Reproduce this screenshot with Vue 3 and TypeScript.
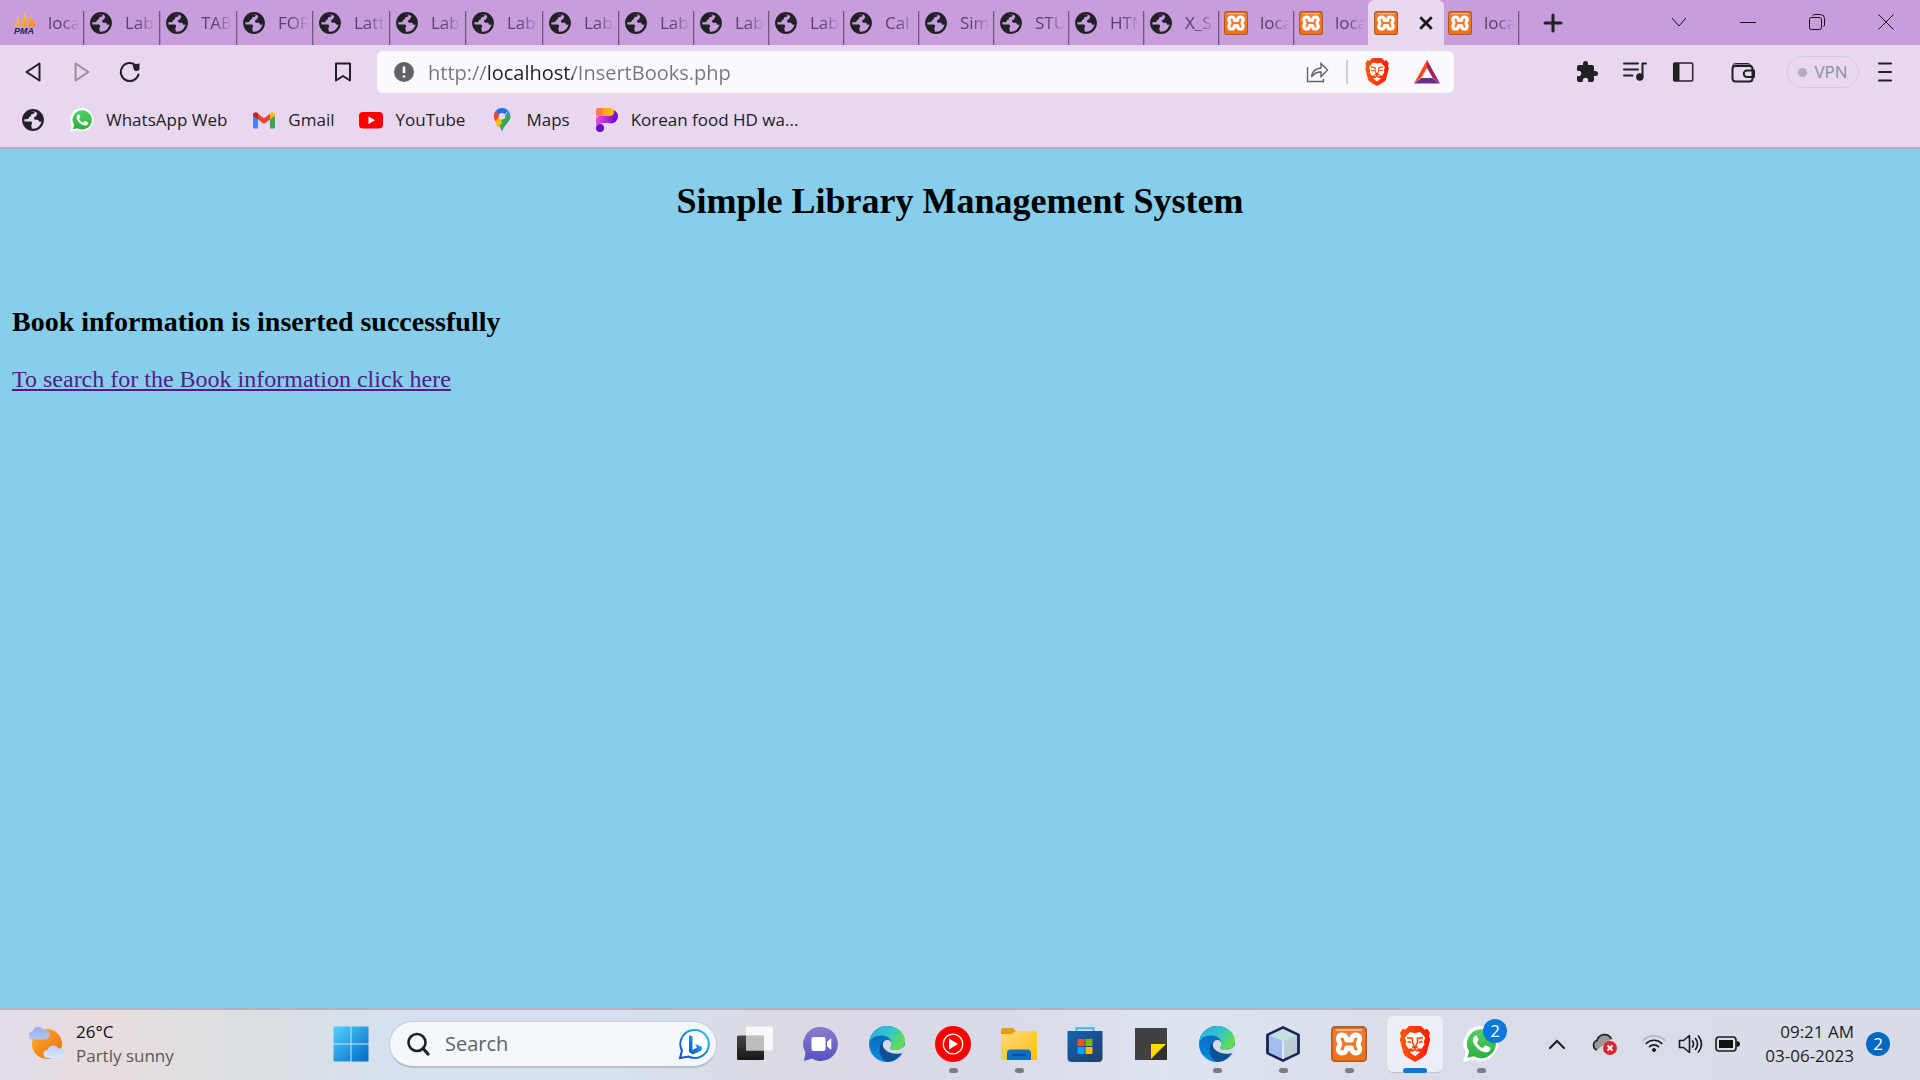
<script setup lang="ts">
import { ref } from 'vue'

interface Tab {
  title: string
  icon: 'globe' | 'xampp' | 'pma'
  size?: 'first' | 'wide' | 'wider' | 'last'
  active?: boolean
}

const tabs: Tab[] = [
  { title: 'loca', icon: 'pma', size: 'first' },
  { title: 'Lab', icon: 'globe', size: 'wide' },
  { title: 'TAB', icon: 'globe', size: 'wider' },
  { title: 'FOR', icon: 'globe', size: 'wide' },
  { title: 'Latt', icon: 'globe', size: 'wider' },
  { title: 'Lab', icon: 'globe', size: 'wide' },
  { title: 'Lab', icon: 'globe', size: 'wider' },
  { title: 'Lab', icon: 'globe', size: 'wide' },
  { title: 'Lab', icon: 'globe' },
  { title: 'Lab', icon: 'globe' },
  { title: 'Lab', icon: 'globe' },
  { title: 'Cal', icon: 'globe' },
  { title: 'Sim', icon: 'globe' },
  { title: 'STU', icon: 'globe' },
  { title: 'HTM', icon: 'globe' },
  { title: 'X_S', icon: 'globe' },
  { title: 'loca', icon: 'xampp' },
  { title: 'loca', icon: 'xampp', size: 'last' },
  { title: '', icon: 'xampp', active: true },
  { title: 'loca', icon: 'xampp', size: 'wide' },
]

const bookmarks = [
  { icon: 'whatsapp', label: 'WhatsApp Web' },
  { icon: 'gmail', label: 'Gmail' },
  { icon: 'youtube', label: 'YouTube' },
  { icon: 'maps', label: 'Maps' },
  { icon: 'picsart', label: 'Korean food HD wa...' },
]

const apps = [
  { icon: 'taskview', name: 'Task view' },
  { icon: 'chat', name: 'Chat' },
  { icon: 'edge', name: 'Edge' },
  { icon: 'music', name: 'YouTube Music', running: true },
  { icon: 'folder', name: 'File Explorer', running: true },
  { icon: 'store', name: 'Store' },
  { icon: 'notes', name: 'Sticky Notes' },
  { icon: 'edge', name: 'Edge', running: true },
  { icon: 'cube', name: 'NetBeans', running: true },
  { icon: 'xampp', name: 'XAMPP', running: true },
  { icon: 'brave', name: 'Brave', running: true, active: true },
  { icon: 'whatsapp', name: 'WhatsApp', running: true, badge: 2 },
]

const url = ref('http://localhost/InsertBooks.php')
const query = ref('')
</script>

<template>
  <div class="screen">
    <svg class="defs" aria-hidden="true">
      <defs>
        <linearGradient id="gWin" x1="0" y1="0" x2="1" y2="1"><stop offset="0" stop-color="#4fd4fc" /><stop offset="1" stop-color="#0067c6" /></linearGradient>
        <linearGradient id="gSun" x1="0" y1="0" x2="1" y2="1"><stop offset="0" stop-color="#f9b52a" /><stop offset="1" stop-color="#f0650f" /></linearGradient>
        <linearGradient id="gCloud" x1="0" y1="0" x2="0" y2="1"><stop offset="0" stop-color="#93b0ee" /><stop offset="1" stop-color="#d9e6fa" /></linearGradient>
        <linearGradient id="gOrange" x1="0" y1="0" x2="0" y2="1"><stop offset="0" stop-color="#c9682a" /><stop offset=".15" stop-color="#f07c32" /><stop offset="1" stop-color="#ee7019" /></linearGradient>
        <linearGradient id="gChat" x1="0" y1="0" x2="0" y2="1"><stop offset="0" stop-color="#8c7cc8" /><stop offset="1" stop-color="#5552c6" /></linearGradient>
        <linearGradient id="gEdgeTop" x1="0" y1="0" x2="1" y2=".5"><stop offset="0" stop-color="#2fa9e6" /><stop offset=".55" stop-color="#31c3cf" /><stop offset="1" stop-color="#62dd50" /></linearGradient>
        <linearGradient id="gEdgeLow" x1="0" y1="0" x2="0" y2="1"><stop offset="0" stop-color="#0c63b4" /><stop offset="1" stop-color="#0a8be3" /></linearGradient>
        <linearGradient id="gFolder" x1="0" y1="0" x2="1" y2="1"><stop offset="0" stop-color="#ffdc76" /><stop offset="1" stop-color="#fbbc16" /></linearGradient>
        <linearGradient id="gStore" x1="0" y1="0" x2="1" y2="1"><stop offset="0" stop-color="#0f66b5" /><stop offset="1" stop-color="#253b66" /></linearGradient>
        <linearGradient id="gBrave" x1="0" y1="0" x2="1" y2="0"><stop offset="0" stop-color="#ff5a0a" /><stop offset="1" stop-color="#ff1a00" /></linearGradient>
        <linearGradient id="gWa" x1="0" y1="0" x2="0" y2="1"><stop offset="0" stop-color="#55cf64" /><stop offset="1" stop-color="#2fae43" /></linearGradient>
        <linearGradient id="gBing" x1="1" y1="0" x2="0" y2="1"><stop offset="0" stop-color="#22c7ee" /><stop offset="1" stop-color="#1648c8" /></linearGradient>
        <linearGradient id="gPma" x1="0" y1="0" x2="1" y2="1"><stop offset="0" stop-color="#ffd27a" /><stop offset="1" stop-color="#f68a00" /></linearGradient>
        <linearGradient id="gDark" x1="0" y1="0" x2="0" y2="1"><stop offset="0" stop-color="#474747" /><stop offset="1" stop-color="#161616" /></linearGradient>
        <linearGradient id="gPic" x1="0" y1="0" x2="1" y2="0"><stop offset="0" stop-color="#ff7a4a" /><stop offset="1" stop-color="#ffc808" /></linearGradient>
        <linearGradient id="gPic2" x1="0" y1="0" x2="1" y2="0"><stop offset="0" stop-color="#f04be0" /><stop offset="1" stop-color="#8a12e8" /></linearGradient>
      </defs>
      <symbol id="globe" viewBox="0 0 24 24">
        <circle cx="12" cy="12" r="9.800" fill="none" stroke="#202124" stroke-width="2.200" />
        <path fill="#202124" d="M3 9 5 5.500 9 3.200 13.500 3.400C14 5.200 12.800 5.800 11.300 6 9.200 6.300 10.700 8.600 8.700 8.800 7.500 9 8.200 10.600 7 10.900 5.400 11.200 4.600 11.300 3 11.200zM14.500 3 18.500 5 21.200 9 21.400 13C19.500 14.400 17.800 13.700 17.500 12.200 17.200 11.300 15 12.300 13.700 11.500 12.300 10.500 13.200 8.700 15 8.600 15.800 8.500 14.800 6.600 16.500 6zM3 13.600H9.400C11.200 13.600 11.700 15.800 10.400 17 9.500 17.900 11.200 18.500 10.600 19.700L11 21.500 6.500 19.700 4 17z" />
      </symbol>
      <symbol id="pma" viewBox="0 0 24 24">
        <path fill="url(#gPma)" d="M1.500 15.500C4 12 5.500 8.500 6.200 4.200c1 4 1.400 8 .6 11.300zM8 15.500C11 11 12.300 6 12.600.500 15 5.500 15.500 10.500 14.600 15.500zM16 15.500c1.500-4 1.600-7 1.200-11C21 8 23 12 23.500 15.500z" />
        <text x="12" y="23" text-anchor="middle" font-family="Liberation Sans, sans-serif" font-size="9" font-weight="700" font-style="italic" fill="#25254f">PMA</text>
      </symbol>
      <symbol id="xampp" viewBox="0 0 36 36">
        <rect x=".8" y=".8" width="34.400" height="34.400" rx="3.500" fill="url(#gOrange)" stroke="#b35b1e" stroke-width="1.600" />
        <path d="M4 3h28l-2 2H6z" fill="#f7b48a" />
        <path fill="#f07822" stroke="#fff" stroke-width="4.800" stroke-linejoin="round" d="M11 9c3 0 4.600 2 4.600 5h4.800c0-3 1.600-5 4.600-5 3 0 4.300 2.800 3.500 5.200-.7 1.500-1.300 2.300-1.300 3.800s.6 2.300 1.300 3.800c.8 2.400-.5 5.200-3.500 5.200s-4.600-2-4.600-5h-4.800c0 3-1.600 5-4.600 5s-4.300-2.800-3.500-5.200c.7-1.500 1.300-2.300 1.300-3.800s-.6-2.300-1.300-3.800C6.700 11.800 8 9 11 9z" />
      </symbol>
      <symbol id="whatsapp" viewBox="0 0 36 36">
        <path fill="#fff" d="M18.500 0A17.500 17.500 0 1 1 10.500 33.500L0 36 2.700 26A17.500 17.500 0 0 1 18.500 0z" />
        <path fill="url(#gWa)" d="M18.500 3.200A14.500 14.500 0 1 1 11 30.200L4.400 31.700 6.200 25.500A14.500 14.500 0 0 1 18.500 3.200z" />
        <path fill="#fff" d="M13 9.800c-.9 0-3 1.500-3 4.200 0 5.600 7.300 12.300 12.900 12.300 2.800 0 4.500-2 4.500-3.600 0-1-.2-1.100-.8-1.500l-3.500-1.700c-.6-.2-1-.1-1.300.3l-1.500 1.800c-.4.500-.9.400-1.400.2-2-.9-3.700-2.500-4.900-4.700-.2-.5-.1-.8.200-1.200l1.200-1.500c.3-.4.2-.8.100-1.200l-1.500-3.300c-.2-.4-.5-.6-1-.1z" />
      </symbol>
      <symbol id="gmail" viewBox="0 0 24 24">
        <path fill="#4285f4" d="M1 6.500 6 10.200V20.500H2.500A1.500 1.500 0 0 1 1 19z" />
        <path fill="#34a853" d="M23 6.500 18 10.200V20.500h3.500A1.500 1.500 0 0 0 23 19z" />
        <path fill="#ea4335" d="M6 5.800 12 10.300 18 5.800V11.500L12 16 6 11.500z" />
        <path fill="#c5221f" d="M1 7C1 4 4 3.600 5.500 4.800L6 5.200v6.300L1 7.800z" />
        <path fill="#fbbc04" d="M23 7c0-3-3-3.400-4.500-2.200L18 5.200v6.300l5-3.700z" />
      </symbol>
      <symbol id="youtube" viewBox="0 0 24 24">
        <rect y="4" width="24" height="16.500" rx="4" fill="#f00" /><path d="M9.500 8.500v7.500l6.500-3.800z" fill="#fff" />
      </symbol>
      <symbol id="maps" viewBox="0 0 24 24">
        <path fill="#34a853" d="M20.300 8.200c0 5.800-6.200 8.300-8.300 15.800-1-3.800-2.500-6-4.200-8.300z" />
        <path fill="#fbbc04" d="M5 11.700 9.500 7l5 5-6.700 7.500C6.500 16 5.500 14 5 11.700z" />
        <path fill="#ea4335" d="M5.600 3l5 4-5.300 6.200C3.200 9.500 3.300 6 5.600 3z" />
        <path fill="#1a73e8" d="M5.600 3C8.500-.500 14.500-1 18 2.500L12 9.500z" />
        <path fill="#4285f4" d="M18 2.500c1.500 1.500 2.300 3.500 2.300 5.700 0 1-.3 2.300-.8 3.300l-5-3z" />
        <path fill="#34a853" d="M20.300 8.200c0 4-3 6.500-5.300 9.300l-4-4.500 6-7z" />
        <circle cx="12" cy="8.300" r="3.200" fill="#e9d7ef" />
      </symbol>
      <symbol id="picsart" viewBox="0 0 24 24">
        <circle cx="16" cy="8.500" r="7" fill="#7a10d8" />
        <rect x="1" y="0" width="18" height="8" rx="4" fill="url(#gPic)" /><path d="M1 3q0-3 3-3h3v8H1z" fill="#ff7a4a" />
        <path d="M1 17v-5c0-3 1-4 4-4h9c5 0 5 7 0 7H8z" fill="url(#gPic2)" />
        <circle cx="5" cy="20" r="4" fill="#6a0bc6" />
      </symbol>
      <symbol id="brave" viewBox="0 0 36 36">
        <path fill="url(#gBrave)" d="M12 0h12l3.500 3.500 3-.500 2.500 4-1 3 1.200 3.500-3.700 14C28.500 30 25 32 18 36 11 32 7.500 30 6.500 27.500L2.800 13.500 4 10 3 7l2.500-4 3 .5z" />
        <path fill="#fff" d="M18 7.200l5-1.200 5.200 5.500-1.500 4.500.8 2.200-3 4.500-3.800-.5-.7 1.600 3 2.500-5 4-5-4 3-2.500-.7-1.600-3.800.5-3-4.500.8-2.200L7.800 11.500 13 6z" />
        <path fill="none" stroke="#ff4200" stroke-width="1.500" d="M10 11.500l5.500 1v4l2.500 5 2.500-5v-4l5.500-1M15 20.500l3 2 3-2M10.500 15.500l3.500 1M25.500 15.500l-3.500 1M14.500 25.500l3.500-2 3.500 2" />
      </symbol>
      <symbol id="taskview" viewBox="0 0 36 36">
        <rect y="9.500" width="27" height="24.500" rx="1.500" fill="url(#gDark)" /><rect x="9" y=".5" width="27" height="24" rx="1.200" fill="#fff" opacity=".8" /><path d="M9 9.500h18v15H9z" fill="#b9b9b9" opacity=".85" />
      </symbol>
      <symbol id="chat" viewBox="0 0 36 36">
        <path fill="url(#gChat)" d="M18 1a17 17 0 1 1-9 31.500L1 35l1.500-8.500A17 17 0 0 1 18 1z" />
        <rect x="8.500" y="11" width="14" height="14" rx="2" fill="#fff" /><path fill="#fff" d="M24 16l3.500-3.500h.8v11h-.8L24 20z" />
      </symbol>
      <symbol id="edge" viewBox="0 0 36 36">
        <circle cx="18" cy="18" r="18" fill="url(#gEdgeLow)" />
        <path fill="url(#gEdgeTop)" d="M0 17A18 18 0 0 1 18 0c11 0 18 7.500 18 15 0 6-4.500 9-9 9-4 0-6-1-6-2.500 0-1 1.500-1.500 1.500-4C22.500 12 17 9.500 12 9.500 6 9.500 1.500 12.500 0 17z" />
        <path fill="#104f98" d="M11 20c1-4 3.500-6 6.500-6-3 2.500-3.500 6-1.500 9 3 4.500 9 5.500 13 4l3.500-.5C30 32 24.500 36 18 36c-5-2-8.500-8-7-16z" />
        <path fill="#d7d9e7" d="M13.800 18c.5-2.500 2.200-4 4.500-4 2.700 0 4.200 1.700 4.200 4 0 2.200-1.500 2.700-1.500 3.700C21 23 23 24 27 24c3 0 6-1.200 9-5v7l-2.500 1c-1.500.5-3.500.700-5.500.7-7 0-14.500-3.500-14.200-9.700z" />
      </symbol>
      <symbol id="music" viewBox="0 0 36 36">
        <circle cx="18" cy="18" r="18" fill="#f00" /><circle cx="18" cy="18" r="9.800" fill="none" stroke="#fff" stroke-width="1.300" /><path d="M14 12.500v11l9-5.500z" fill="#fff" />
      </symbol>
      <symbol id="folder" viewBox="0 0 36 36">
        <path fill="#dfa00c" d="M0 4a2 2 0 0 1 2-2h10l3 3v6H0z" /><path fill="url(#gFolder)" d="M0 8h11l4-3h19a2 2 0 0 1 2 2v27H0z" />
        <path fill="#0e6fc2" d="M6 34V27a3.500 3.500 0 0 1 3.500-3.500h17A3.500 3.500 0 0 1 30 27v7z" /><path d="M11 29h14" stroke="#084f91" stroke-width="1.800" />
      </symbol>
      <symbol id="store" viewBox="0 0 36 36">
        <path d="M9.500 7V2.200h17V7" fill="none" stroke="#35b8ec" stroke-width="2" /><path fill="url(#gStore)" d="M.5 5h35v27a4 4 0 0 1-4 4h-27a4 4 0 0 1-4-4z" />
        <path fill="#f25022" d="M10.500 13h7v7h-7z" /><path fill="#7fba00" d="M18.500 13h7v7h-7z" /><path fill="#00a4ef" d="M10.500 21h7v7h-7z" /><path fill="#ffb900" d="M18.500 21h7v7h-7z" />
      </symbol>
      <symbol id="notes" viewBox="0 0 36 36">
        <path d="M2 2h32v32H2z" fill="#414141" /><path d="M18 18h16v16H18z" fill="#303030" /><path d="M18 18h15L18 33z" fill="#fedc00" />
      </symbol>
      <symbol id="cube" viewBox="0 0 36 36">
        <path d="M18 1.500 33.500 9v18L18 34.500 2.500 27V9z" fill="#b8cdf5" stroke="#1c2358" stroke-width="2.800" stroke-linejoin="round" />
        <path d="M18 3 32 9.500 18 15 4 9.500z" fill="#c5dfdc" /><path d="M18 15v18l14-6.500v-17z" fill="#bccdd6" /><path d="M4 9.500 18 15v18L4 26.500z" fill="#a5bcf0" /><path d="M18 15v18" stroke="#edf5ff" stroke-width="1.500" />
      </symbol>
    </svg>

    <header class="browser">
      <nav class="tabs" aria-label="Tabs">
        <button v-for="(tab, i) in tabs" :key="i" type="button" class="tab" :class="[tab.size, { active: tab.active }]">
          <svg class="i24"><use :href="'#' + tab.icon" /></svg>
          <span v-if="!tab.active" class="tab-title">{{ tab.title }}</span>
          <svg v-else class="tab-close" viewBox="0 0 14 14"><path d="M2 2l10 10M12 2 2 12" stroke="#111" stroke-width="2.400" /></svg>
        </button>
        <button type="button" class="new-tab" aria-label="New tab"><svg width="20" height="20" viewBox="0 0 20 20"><path d="M10 2v16M2 10h16" stroke="#202124" stroke-width="3" stroke-linecap="round" /></svg></button>
        <div class="window-controls">
          <button type="button" aria-label="Search tabs"><svg width="16" height="16" viewBox="0 0 16 16"><path d="M1 4l7 8 7-8" /></svg></button>
          <button type="button" aria-label="Minimize"><svg width="16" height="16" viewBox="0 0 16 16"><path d="M0 8.500h16" /></svg></button>
          <button type="button" aria-label="Restore"><svg width="16" height="16" viewBox="0 0 16 16"><rect x=".5" y="3.500" width="12" height="12" rx="2" /><path d="M3.500 1.500Q4 .500 6 .500h5.500a4 4 0 0 1 4 4V11q0 1-1 1.500" /></svg></button>
          <button type="button" aria-label="Close"><svg width="16" height="16" viewBox="0 0 16 16"><path d="M.5.500l15 15M15.500.500l-15 15" /></svg></button>
        </div>
      </nav>

      <div class="toolbar">
        <div class="nav-buttons">
          <button type="button" aria-label="Back"><svg class="i24" viewBox="0 0 24 24"><path d="M17.500 3.500v17L4.500 12z" class="ln" /></svg></button>
          <button type="button" aria-label="Forward"><svg class="i24 dim" viewBox="0 0 24 24"><path d="M5.500 3.500v17L18.500 12z" class="ln" /></svg></button>
          <button type="button" aria-label="Reload"><svg class="i24" viewBox="0 0 24 24"><path d="M18 5.500A9 9 0 1 0 20.500 14.500" class="ln" /><path d="M14.500 4.500 21.500 3.500v4a3 3 0 0 1-6 1z" fill="#202124" /></svg></button>
        </div>
        <button type="button" class="save" aria-label="Bookmark this page"><svg class="i24" viewBox="0 0 24 24"><path d="M5 3.500h14v17l-7-4.500-7 4.500z" class="ln" /></svg></button>
        <div class="omnibox">
          <svg width="20" height="20" viewBox="0 0 20 20"><circle cx="10" cy="10" r="10" fill="#5f6368" /><path d="M10 4.500v6.500M10 13.500v2" stroke="#fff" stroke-width="2.600" /></svg>
          <input v-model="url" class="url" type="text" aria-label="Address" spellcheck="false" />
          <button type="button" aria-label="Share"><svg class="i24" viewBox="0 0 24 24" fill="none" stroke="#5f6368" stroke-width="1.400"><path d="M2.500 7v14.500h16V19" /><path d="M6.500 17C7 11 10.500 8.500 16 8V3.500l6.500 6.500-6.500 6.500V12C12 12 9 13 6.500 17z" /></svg></button>
          <span class="divider"></span>
          <button type="button" aria-label="Shields"><svg width="28" height="28"><use href="#brave" /></svg></button>
          <button type="button" aria-label="Rewards" class="rewards"><svg width="26" height="24" viewBox="0 0 26 24"><path d="M13 0v8L7.500 17.500 0 23.500z" fill="#ff4724" /><path d="M13 0 26 23.500l-7.500-6L13 8z" fill="#9e1f63" /><path d="M0 23.500 7.500 18h11l7.500 5.500z" fill="#662d91" /></svg></button>
        </div>
        <div class="tools">
          <button type="button" aria-label="Extensions"><svg class="i24" viewBox="0 0 24 24"><path fill="#202124" d="M20.500 11H19V7a2 2 0 0 0-2-2h-4V3.500a2.500 2.500 0 0 0-5 0V5H4a2 2 0 0 0-2 2v3.800h1.500a2.700 2.700 0 0 1 0 5.400H2V20a2 2 0 0 0 2 2h3.800v-1.500a2.700 2.700 0 0 1 5.400 0V22H17a2 2 0 0 0 2-2v-4h1.500a2.500 2.500 0 0 0 0-5z" /></svg></button>
          <button type="button" aria-label="Media"><svg class="i24" viewBox="0 0 24 24"><path d="M1 3.500h14M1 9.500h14M1 15.500h8.500M19.500 17V3.500H23" class="ln" /><circle cx="16.800" cy="17" r="3.700" fill="#202124" /></svg></button>
          <button type="button" aria-label="Sidebar"><svg class="i24" viewBox="0 0 24 24"><rect x="2.700" y="3" width="19" height="18" rx="1" class="ln side" /><path d="M3 3h5.500v18H3z" fill="#202124" /></svg></button>
          <button type="button" class="wallet" aria-label="Wallet"><svg class="i24" viewBox="0 0 24 24"><rect x="1.500" y="6" width="20" height="15.500" rx="3" class="ln" /><path d="M2 7C1 4.500 2.500 3.500 4.500 3.500H16c3 0 4 1 4.500 3M3 5h15" class="ln thin" /><path d="M23 10.500h-7a3 3 0 0 0 0 6.500h7z" class="ln" fill="#e9d7ef" /></svg></button>
          <button type="button" class="vpn"><i></i>VPN</button>
          <button type="button" aria-label="Menu"><svg width="14" height="20" viewBox="0 0 14 20"><path d="M1 1.500h12M1 10h12M1 18.500h12" class="ln" /></svg></button>
        </div>
      </div>

      <nav class="bookmarks" aria-label="Bookmarks">
        <a href="#" aria-label="Bookmark"><svg class="i24"><use href="#globe" /></svg></a>
        <a v-for="b in bookmarks" :key="b.label" href="#"><svg class="i24"><use :href="'#' + b.icon" /></svg>{{ b.label }}</a>
      </nav>
    </header>

    <main class="page">
      <h2>Simple Library Management System</h2>
      <h3>Book information is inserted successfully</h3>
      <a href="#">To search for the Book information click here</a>
    </main>

    <footer class="taskbar">
      <div class="weather">
        <svg width="36" height="36" viewBox="0 0 36 36"><circle cx="18" cy="18" r="15" fill="url(#gSun)" /><path fill="url(#gCloud)" d="M3.500 13.500a4 4 0 0 1 0-8 6 6 0 0 1 11-1.500 4.500 4.500 0 0 1 2.500 9.500zM18.500 32a4 4 0 0 1 0-8 6 6 0 0 1 11-1.500 4.800 4.800 0 0 1 2.500 9.500z" /></svg>
        <p><b>26°C</b><span>Partly sunny</span></p>
      </div>
      <button type="button" class="app" aria-label="Start"><svg class="i36" viewBox="0 0 36 36" fill="url(#gWin)"><path d="M1.500.5h16v17h-17v-16a1 1 0 0 1 1-1zM18.500.500h16a1 1 0 0 1 1 1v16h-17zM.5 18.500h17v17h-16a1 1 0 0 1-1-1zM18.500 18.500h17v16a1 1 0 0 1-1 1h-16z" /></svg></button>
      <div class="search">
        <svg class="i24" viewBox="0 0 24 24"><circle cx="11" cy="10.500" r="8.500" fill="none" stroke="#222" stroke-width="2.600" /><path d="M17 16.500l5 5.500" stroke="#222" stroke-width="3.200" stroke-linecap="round" /></svg>
        <input v-model="query" type="search" placeholder="Search" aria-label="Search" />
        <svg width="32" height="32" viewBox="0 0 32 32"><path d="M16.500 2a14 14 0 1 1-6 26.500L2 30l2-7.500A14 14 0 0 1 16.500 2z" fill="#fff" stroke="url(#gBing)" stroke-width="2" /><path d="M11 7l3.500 1.500V22l4.500-2.500-2-3.500 6.500 2.500c1 2 .5 3.500-1 4.500L15 26.500l-4-2.500z" fill="url(#gBing)" /></svg>
      </div>
      <button v-for="(app, i) in apps" :key="i" type="button" class="app" :class="{ current: app.active }" :aria-label="app.name">
        <svg class="i36"><use :href="'#' + app.icon" /></svg>
        <span v-if="app.running" class="mark"></span>
        <span v-if="app.badge" class="badge count">{{ app.badge }}</span>
      </button>
      <div class="tray">
        <svg width="18" height="12" viewBox="0 0 18 12"><path d="M2 10l7-7 7 7" fill="none" stroke="#1c1c1c" stroke-width="2" stroke-linecap="round" /></svg>
        <svg class="cloud" width="26" height="24" viewBox="0 0 26 24"><path d="M5 18a5 5 0 0 1 0-9.500C7 1.500 16 .500 19.500 7" fill="#999" stroke="#222" stroke-width="1.700" /><circle cx="18" cy="16" r="7" fill="#dc2530" /><path d="M15.500 13.500l5 5M20.500 13.500l-5 5" stroke="#fff" stroke-width="1.800" /></svg>
        <svg class="wifi" width="24" height="24" viewBox="0 0 24 24" fill="none" stroke="#1c1c1c" stroke-width="1.700" stroke-linecap="round"><path d="M1 8.500a15.500 15.500 0 0 1 22 0" stroke="#b1b3bf" /><path d="M4.200 11.500a11 11 0 0 1 15.600 0M7.500 14.700a6.500 6.500 0 0 1 9 0" /><circle cx="12" cy="18" r="1.600" fill="#1c1c1c" stroke-width="1" /></svg>
        <svg width="25" height="24" viewBox="0 0 25 24" fill="none" stroke="#1c1c1c" stroke-width="1.600" stroke-linecap="round"><path d="M1.500 8.500h4L11.500 3.500v17L5.500 15.500h-4z" stroke-linejoin="round" /><path d="M14.500 9q2 3 0 6M17.500 6.500q4 5.500 0 11M20.500 4q6 8 0 16" /></svg>
        <svg width="25" height="24" viewBox="0 0 25 24"><rect x="1" y="5" width="20" height="14" rx="3" fill="none" stroke="#1c1c1c" stroke-width="1.600" /><rect x="4" y="8" width="14" height="8" fill="#111" /><path d="M22 9.500v5a2.500 2.500 0 0 0 0-5z" fill="#111" stroke="#111" /></svg>
        <p class="clock">09:21 AM<br />03-06-2023</p>
        <span class="badge">2</span>
      </div>
    </footer>
  </div>
</template>

<style>
body {
  margin: 0;
}
</style>

<style scoped>
.screen {
  display: flex;
  flex-direction: column;
  min-height: 100vh;
  font-family: "Open Sans", "Noto Sans", sans-serif;
  font-size: 17px;
  line-height: 24px;
  color: #202124;
}
.defs {
  position: absolute;
  width: 0;
  height: 0;
}
button {
  display: flex;
  align-items: center;
  justify-content: center;
  padding: 0;
  border: 0;
  background: none;
  font: inherit;
  color: inherit;
}
svg {
  display: block;
  flex: none;
}
p {
  margin: 0;
}
.i24 {
  width: 24px;
  height: 24px;
}
.i36 {
  width: 36px;
  height: 36px;
}
.ln {
  fill: none;
  stroke: #202124;
  stroke-width: 2;
  stroke-linejoin: round;
  stroke-linecap: round;
}
.thin {
  stroke-width: 1;
}
.side {
  stroke-width: 1.500;
}
.dim {
  opacity: 0.4;
}
.browser {
  background: #e9d7ef;
  border-bottom: 2px solid #b9abc7;
}
.tabs {
  display: flex;
  height: 45px;
  background: #c79ddc;
}
.tab {
  position: relative;
  box-sizing: border-box;
  flex: none;
  justify-content: flex-start;
  gap: 12px;
  width: 75px;
  padding: 1px 5px 0 4px;
}
.tab::after {
  content: "";
  position: absolute;
  right: 0;
  top: 11px;
  bottom: 0;
  width: 1px;
  border-right: 1px solid #ae8ac1;
  background: #6e5681;
}
.tab.first {
  width: 85px;
  padding-left: 12px;
}
.tab.wide {
  width: 76px;
}
.tab.wider {
  width: 77px;
}
.tab.last {
  width: 73px;
  padding-right: 3px;
}
.tab.active {
  width: 76px;
  gap: 20px;
  padding-left: 6px;
  border-radius: 6px 6px 0 0;
  background: #e9d7ef;
}
.tab.last::after,
.tab.active::after {
  display: none;
}
.tab-title {
  flex: 1;
  min-width: 0;
  white-space: nowrap;
  text-align: left;
  color: #58426a;
  mask-image: linear-gradient(90deg, #000 40%, transparent);
}
.tab-close {
  width: 16px;
  height: 16px;
}
.new-tab {
  width: 66px;
}
.window-controls {
  display: flex;
  align-items: center;
  gap: 53px;
  height: 43px;
  margin-left: auto;
  padding-right: 26px;
}
.window-controls svg {
  fill: none;
  stroke: #111;
}
.toolbar {
  display: flex;
  align-items: center;
  height: 54px;
  padding: 0 24px 0 22px;
}
.nav-buttons {
  display: flex;
  gap: 24px;
  width: 309px;
}
.save {
  margin-right: 22px;
}
.omnibox {
  display: flex;
  flex: 1;
  align-items: center;
  box-sizing: border-box;
  height: 42px;
  padding: 0 14px 0 17px;
  border-radius: 6px;
  background: #fcf9fe;
}
.url {
  flex: 1;
  min-width: 0;
  height: 32px;
  margin-left: 14px;
  padding: 0;
  border: 0;
  outline: 0;
  font: inherit;
  font-size: 20px;
  color: transparent;
  background: linear-gradient(90deg, #74767a 60px, #202124 60px, #202124 145px, #74767a 145px);
  background-clip: text;
  -webkit-background-clip: text;
}
.divider {
  width: 2px;
  height: 24px;
  margin: 0 15px 0 17px;
  background: #cdd0d4;
}
.rewards {
  margin-left: 23px;
}
.tools {
  display: flex;
  align-items: center;
  gap: 24px;
  width: 321px;
  margin-left: 121px;
}
.wallet {
  margin-left: 12px;
}
.vpn {
  box-sizing: border-box;
  gap: 7px;
  width: 72px;
  height: 32px;
  margin-left: 8px;
  margin-right: -5px;
  border: 1px solid #cbcfd5;
  border-radius: 16px;
  color: #8b8fa6;
}
.vpn i {
  width: 9px;
  height: 9px;
  border-radius: 50%;
  background: #adaec3;
}
.bookmarks {
  display: flex;
  align-items: center;
  gap: 25px;
  height: 42px;
  padding: 0 21px 6px;
}
.bookmarks a {
  display: flex;
  align-items: center;
  gap: 12px;
  color: #202124;
  text-decoration: none;
}
.page {
  flex: 1;
  padding: 0 12px;
  background: #87ceeb;
  font-family: "Liberation Serif", serif;
  font-size: 24px;
  line-height: 28px;
  color: #000;
}
.page h2 {
  margin: 31px 0 84px;
  font-size: 36px;
  line-height: 42px;
  text-align: center;
}
.page h3 {
  margin: 0 0 27px;
  font-size: 28px;
  line-height: 32px;
}
.page a {
  color: #551a8b;
}
.taskbar {
  display: flex;
  align-items: center;
  gap: 10px;
  box-sizing: border-box;
  height: 72px;
  padding-bottom: 2px;
  border-top: 2px solid #b4b3bd;
  background: linear-gradient(90deg, #e0dce8 0, #e8dcde 110px, #dedfe0 190px, #dbdee2 270px, #d5e1ee 390px, #d5e1ee 620px, #dadae4 760px, #d9dae8 1000px, #dde3ef 1160px, #d8dde9 1420px, #d8dce9 100%);
}
.weather {
  display: flex;
  align-items: center;
  gap: 11px;
  width: 284px;
  padding-left: 29px;
}
.weather b,
.weather span {
  display: block;
  font-weight: 400;
}
.weather b {
  color: #111;
}
.weather span {
  color: #595959;
}
.app {
  position: relative;
  width: 56px;
  height: 56px;
  border-radius: 6px;
}
.app.current {
  background: #eceef6;
  box-shadow: 0 1px 1px #bfc4cf;
}
.mark {
  position: absolute;
  bottom: -1px;
  left: 24px;
  width: 9px;
  height: 5px;
  border-radius: 3px;
  background: #7c7d84;
}
.current .mark {
  left: 16px;
  width: 24px;
  background: #0b77d6;
}
.badge {
  width: 24px;
  height: 24px;
  border-radius: 50%;
  background: #0768c4;
  color: #fff;
  text-align: center;
}
.count {
  position: absolute;
  top: 3px;
  right: 2px;
  background: #0b77d6;
}
.search {
  display: flex;
  align-items: center;
  box-sizing: border-box;
  width: 328px;
  height: 47px;
  padding: 0 6px 0 16px;
  border: 1px solid #c5ccd8;
  border-bottom: 2px solid #b4bfcb;
  border-radius: 24px;
  background: #f4f7fb;
}
.search input {
  flex: 1;
  min-width: 0;
  margin-left: 15px;
  padding: 0;
  border: 0;
  outline: 0;
  background: none;
  font: inherit;
  font-size: 20px;
}
.search input::placeholder {
  color: #5f6266;
}
.tray {
  display: flex;
  align-items: center;
  gap: 12px;
  margin-left: auto;
  padding-right: 30px;
  color: #1c1c1c;
}
.cloud {
  margin-left: 14px;
}
.wifi {
  margin-left: 12px;
}
.clock {
  min-width: 102px;
  text-align: right;
}
</style>
